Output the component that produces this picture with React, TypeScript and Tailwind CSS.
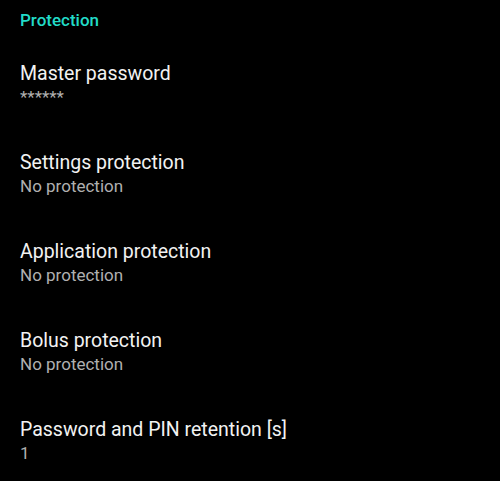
const items = [
  { title: "Master password", summary: "******" },
  { title: "Settings protection", summary: "No protection" },
  { title: "Application protection", summary: "No protection" },
  { title: "Bolus protection", summary: "No protection" },
  { title: "Password and PIN retention [s]", summary: "1" },
];

export default function App() {
  return (
    <div className="min-h-[481px] w-full bg-black font-['Roboto',sans-serif]">
      <div className="flex h-[40px] items-center px-5 pt-[1px]">
        <span className="text-[17px] font-medium text-[#22dcc8]">Protection</span>
      </div>
      {items.map((item) => (
        <div key={item.title} className="flex h-[89px] flex-col justify-center px-5">
          <span className="text-[19.5px] leading-[24px] text-[#f2f2f2]">{item.title}</span>
          <span className="text-[17px] leading-[22px] text-[#b0b0b0]">{item.summary}</span>
        </div>
      ))}
    </div>
  );
}
